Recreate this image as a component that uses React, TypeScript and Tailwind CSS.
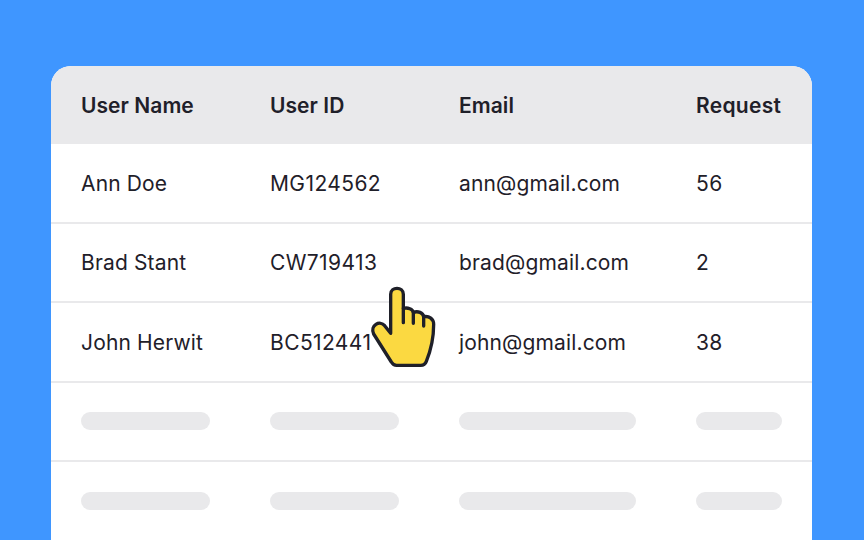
import React from 'react';

const ROWS = [
  { name: 'Ann Doe', id: 'MG124562', email: 'ann@gmail.com', request: '56' },
  { name: 'Brad Stant', id: 'CW719413', email: 'brad@gmail.com', request: '2' },
  { name: 'John Herwit', id: 'BC512441', email: 'john@gmail.com', request: '38' },
];

function Hand() {
  return (
    <svg viewBox="0 0 300 300" className="absolute left-[299px] top-[209px] w-[100px] h-[100px]">
      <path
        d="M122 175 L122 58 C122 34 160 34 160 58 L160 100 C174 97 188 102 190 112 C204 107 219 113 221 125 C238 122 251 132 251 148 C251 185 243 225 229 259 C226 267 220 271 212 271 L140 271 C133 271 128 268 124 261 L71 177 C59 150 90 135 104 152 Z"
        fill="#fbd941"
        stroke="#1f2029"
        strokeWidth="10"
        strokeLinejoin="round"
      />
      <path
        d="M160 100 L160 143 M190 112 L190 145 M221 125 L221 153"
        fill="none"
        stroke="#1f2029"
        strokeWidth="10"
        strokeLinecap="round"
      />
    </svg>
  );
}

function Cell({ className, children }: { className: string; children: React.ReactNode }) {
  return <div className={className}>{children}</div>;
}

export default function App() {
  return (
    <div className="h-[540px] w-[864px] overflow-hidden bg-[#3f96ff] pl-[51px] pr-[52.4px] pt-[66px] font-['Inter',sans-serif] text-[#1f2029]">
      <div className="relative h-[474px] rounded-t-[20px] bg-white overflow-hidden">
        {/* Header */}
        <div className="flex h-[78px] items-center bg-[#e9e9eb] pl-[30px] pt-px text-[21px] tracking-[0.05px] font-semibold">
          <Cell className="w-[189px]">User Name</Cell>
          <Cell className="w-[189px]">User ID</Cell>
          <Cell className="w-[237px]">Email</Cell>
          <Cell className="tracking-[0.3px]">Request</Cell>
        </div>

        {/* Rows */}
        {ROWS.map(row => (
          <div key={row.id} className="flex h-[79.5px] items-center border-b-2 border-[#e9e9eb] pl-[30px] pt-px text-[21px] tracking-[0.15px]">
            <Cell className="w-[189px]">{row.name}</Cell>
            <Cell className="w-[189px] tracking-[0.4px]">{row.id}</Cell>
            <Cell className="w-[237px]">{row.email}</Cell>
            <Cell className="tracking-[0.4px]">{row.request}</Cell>
          </div>
        ))}

        {/* Placeholder rows */}
        {[0, 1].map(i => (
          <div key={i} className="flex h-[79.5px] items-center border-b-2 border-[#e9e9eb] pl-[30px]">
            <div className="w-[189px]"><div className="h-[18px] w-[129px] rounded-full bg-[#e9e9eb]" /></div>
            <div className="w-[189px]"><div className="h-[18px] w-[129px] rounded-full bg-[#e9e9eb]" /></div>
            <div className="w-[237px]"><div className="h-[18px] w-[177px] rounded-full bg-[#e9e9eb]" /></div>
            <div className="h-[18px] w-[86px] rounded-full bg-[#e9e9eb]" />
          </div>
        ))}

        <Hand />
      </div>
    </div>
  );
}
